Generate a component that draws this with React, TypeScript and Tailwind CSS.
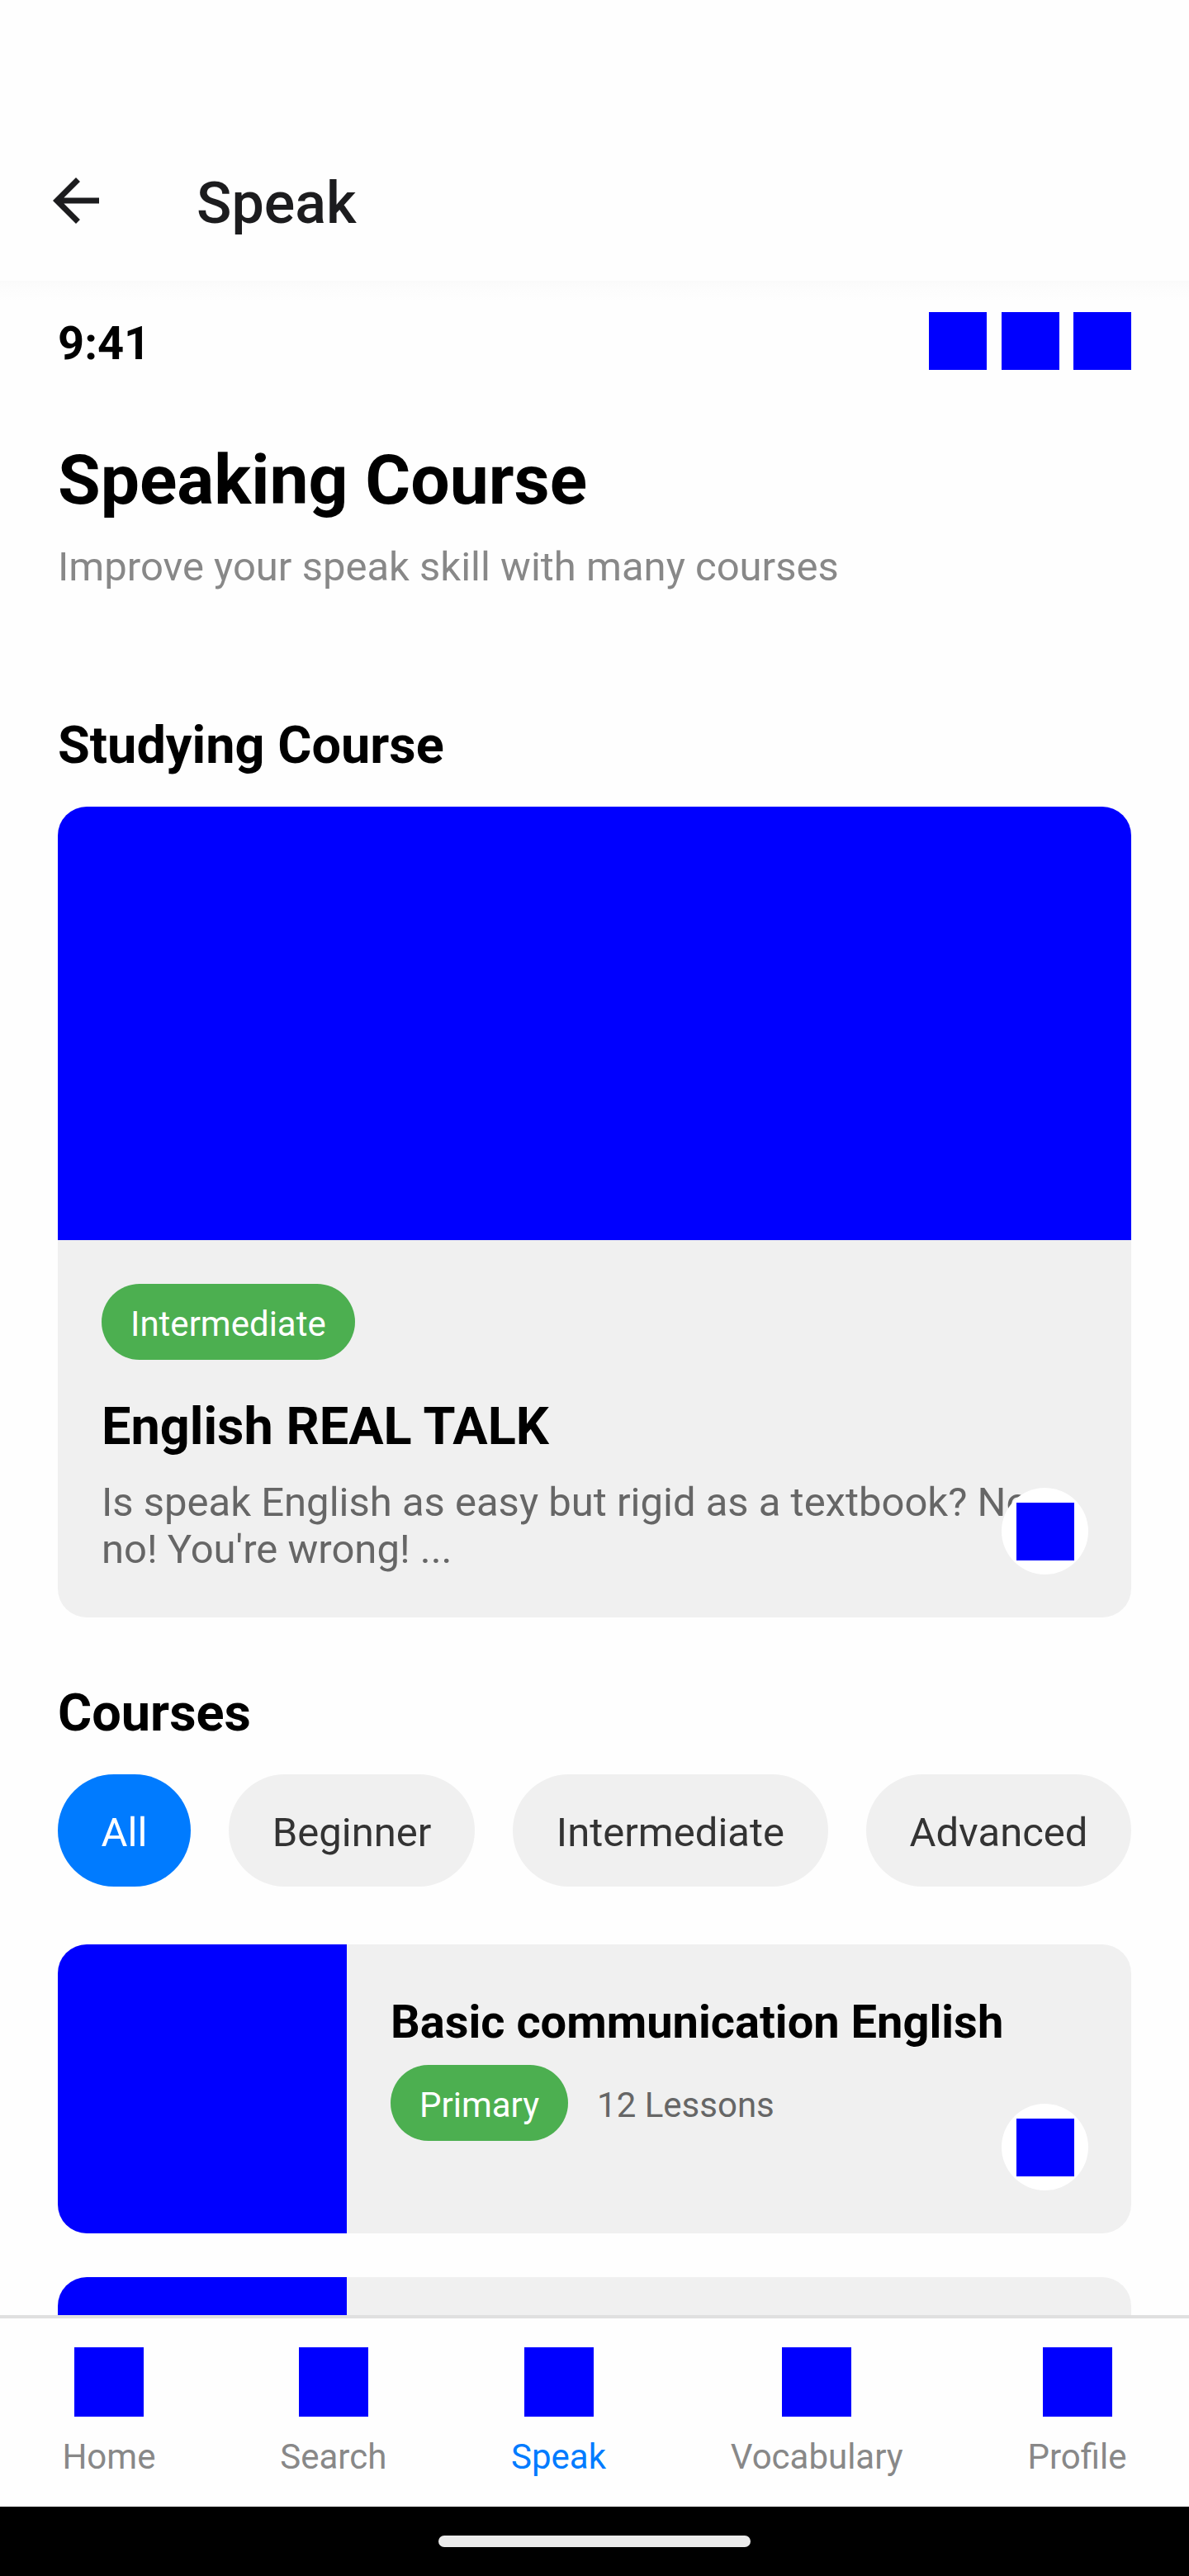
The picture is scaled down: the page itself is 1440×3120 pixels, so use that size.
type NavItem = { label: string; active?: boolean };
type Course = { title: string; level: string; lessons: string };

const levels = ['All', 'Beginner', 'Intermediate', 'Advanced'];

const courses: Course[] = [
  { title: 'Basic communication English', level: 'Primary', lessons: '12 Lessons' },
];

const navItems: NavItem[] = [
  { label: 'Home' },
  { label: 'Search' },
  { label: 'Speak', active: true },
  { label: 'Vocabulary' },
  { label: 'Profile' },
];

function PlayButton() {
  return (
    <button className="absolute right-[52px] bottom-[52px] flex size-[105px] items-center justify-center rounded-full bg-white">
      <span className="size-[70px] bg-[#0000ff]" />
    </button>
  );
}

function Badge({ label }: { label: string }) {
  return (
    <span className="flex h-[92px] w-fit items-center rounded-full bg-[#4caf50] px-[35px] pt-[5px] text-[42px] leading-[49px] text-white">
      {label}
    </span>
  );
}

function CourseCard({ course }: { course?: Course }) {
  return (
    <article className="relative flex h-[350px] shrink-0 overflow-hidden rounded-[35px] bg-[#f0f0f0]">
      <div className="w-[350px] shrink-0 bg-[#0000ff]" />
      {course && (
        <>
          <div className="flex-1 pt-[61px] pl-[53px]">
            <h3 className="text-[56px] leading-[66px] font-bold">{course.title}</h3>
            <div className="mt-[19px] flex items-center gap-[35px]">
              <Badge label={course.level} />
              <span className="pt-[5px] text-[42px] leading-[49px] text-[#666]">{course.lessons}</span>
            </div>
          </div>
          <PlayButton />
        </>
      )}
    </article>
  );
}

export default function App() {
  return (
    <div className="flex h-[3120px] w-[1440px] flex-col overflow-hidden bg-[#fefefe] font-['Roboto',sans-serif] text-black">
      <header className="flex h-[340px] shrink-0 items-start gap-[104px] pl-[50px] text-[#1c1c1e]">
        <svg className="mt-[201px] size-[84px]" viewBox="0 0 24 24" fill="currentColor">
          <path d="M20 11H7.83l5.59-5.59L12 4l-8 8 8 8 1.41-1.41L7.83 13H20z" />
        </svg>
        <span className="mt-[205px] text-[70px] leading-[82px] font-medium">Speak</span>
      </header>

      <main className="flex h-[2464px] shrink-0 flex-col overflow-hidden bg-[linear-gradient(to_bottom,#fafafa_0px,#fcfcfc_8px,#fdfdfd_18px,#fefefe_24px)] px-[70px] pt-[38px]">
        <div className="flex h-[70px] shrink-0 items-center justify-between">
          <span className="pt-[6px] text-[56px] leading-[66px] font-bold">9:41</span>
          <div className="flex gap-[17.5px]">
            <span className="size-[70px] bg-[#0000ff]" />
            <span className="size-[70px] bg-[#0000ff]" />
            <span className="size-[70px] bg-[#0000ff]" />
          </div>
        </div>

        <h1 className="mt-[85px] text-[84px] leading-[98px] font-bold">Speaking Course</h1>
        <p className="mt-[27px] text-[49px] leading-[58px] text-[#888]">
          Improve your speak skill with many courses
        </p>

        <h2 className="mt-[150px] text-[63px] leading-[74px] font-bold">Studying Course</h2>
        <article className="relative mt-[37px] h-[982px] shrink-0 overflow-hidden rounded-[35px] bg-[#f0f0f0]">
          <div className="h-[525px] bg-[#0000ff]" />
          <div className="px-[53px] pt-[53px]">
            <Badge label="Intermediate" />
            <h3 className="mt-[44px] text-[63px] leading-[74px] font-bold">English REAL TALK</h3>
            <p className="mt-[26px] text-[49px] leading-[57px] text-[#666]">
              Is speak English as easy but rigid as a textbook? No
              <br />
              no! You're wrong! ...
            </p>
          </div>
          <PlayButton />
        </article>

        <h2 className="mt-[79px] text-[63px] leading-[74px] font-bold">Courses</h2>
        <div className="mt-[37px] flex shrink-0 justify-between">
          {levels.map((level, index) => (
            <button
              key={level}
              className={`flex h-[136px] items-center rounded-full px-[52.5px] pt-[5px] text-[49px] leading-[58px] ${
                index === 0 ? 'bg-[#007bff] text-white' : 'bg-[#f0f0f0] text-[#333]'
              }`}
            >
              {level}
            </button>
          ))}
        </div>

        <div className="mt-[70px] flex flex-col gap-[53px]">
          {courses.map((course) => (
            <CourseCard key={course.title} course={course} />
          ))}
          <CourseCard />
        </div>
      </main>

      <nav className="flex h-[232px] shrink-0 justify-around border-t-4 border-[#e0e0e0] pt-[35px]">
        {navItems.map(({ label, active }) => (
          <a key={label} className="flex flex-col items-center">
            <span className="size-[84px] bg-[#0000ff]" />
            <span
              className={`mt-[24px] text-[42px] leading-[49px] ${active ? 'text-[#007bff]' : 'text-[#888]'}`}
            >
              {label}
            </span>
          </a>
        ))}
      </nav>

      <footer className="flex h-[84px] shrink-0 justify-center bg-black pt-[35px]">
        <span className="h-[14px] w-[378px] rounded-full bg-[#ebebeb]" />
      </footer>
    </div>
  );
}
